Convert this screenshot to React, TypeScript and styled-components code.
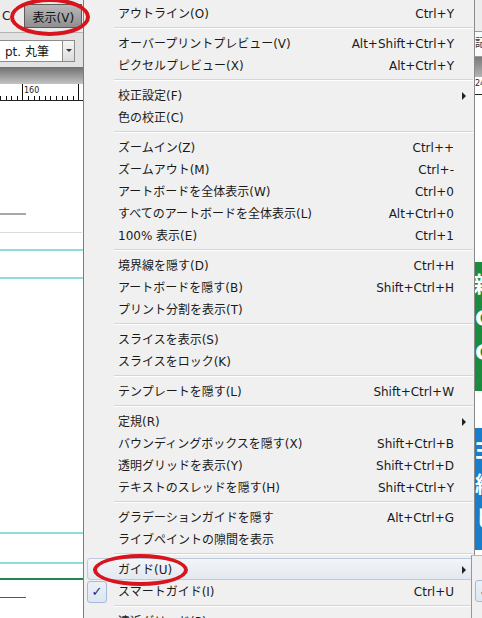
import styled, { createGlobalStyle, css } from 'styled-components';

const GlobalStyle = createGlobalStyle`
  html, body {
    margin: 0;
    padding: 0;
    background: #ffffff;
  }
`;

type Item =
  | { sep: true }
  | {
      sep?: false;
      label: string;
      shortcut?: string;
      sub?: boolean;
      checked?: boolean;
      active?: boolean;
    };

const items: Item[] = [
  { label: 'アウトライン(O)', shortcut: 'Ctrl+Y' },
  { sep: true },
  { label: 'オーバープリントプレビュー(V)', shortcut: 'Alt+Shift+Ctrl+Y' },
  { label: 'ピクセルプレビュー(X)', shortcut: 'Alt+Ctrl+Y' },
  { sep: true },
  { label: '校正設定(F)', sub: true },
  { label: '色の校正(C)' },
  { sep: true },
  { label: 'ズームイン(Z)', shortcut: 'Ctrl++' },
  { label: 'ズームアウト(M)', shortcut: 'Ctrl+-' },
  { label: 'アートボードを全体表示(W)', shortcut: 'Ctrl+0' },
  { label: 'すべてのアートボードを全体表示(L)', shortcut: 'Alt+Ctrl+0' },
  { label: '100% 表示(E)', shortcut: 'Ctrl+1' },
  { sep: true },
  { label: '境界線を隠す(D)', shortcut: 'Ctrl+H' },
  { label: 'アートボードを隠す(B)', shortcut: 'Shift+Ctrl+H' },
  { label: 'プリント分割を表示(T)' },
  { sep: true },
  { label: 'スライスを表示(S)' },
  { label: 'スライスをロック(K)' },
  { sep: true },
  { label: 'テンプレートを隠す(L)', shortcut: 'Shift+Ctrl+W' },
  { sep: true },
  { label: '定規(R)', sub: true },
  { label: 'バウンディングボックスを隠す(X)', shortcut: 'Shift+Ctrl+B' },
  { label: '透明グリッドを表示(Y)', shortcut: 'Shift+Ctrl+D' },
  { label: 'テキストのスレッドを隠す(H)', shortcut: 'Shift+Ctrl+Y' },
  { sep: true },
  { label: 'グラデーションガイドを隠す', shortcut: 'Alt+Ctrl+G' },
  { label: 'ライブペイントの隙間を表示' },
  { sep: true },
  { label: 'ガイド(U)', sub: true, active: true },
  { label: 'スマートガイド(I)', shortcut: 'Ctrl+U', checked: true },
  { sep: true },
  { label: '遠近グリッド(P)', sub: true },
];

const Screen = styled.div`
  position: relative;
  width: 482px;
  height: 618px;
  overflow: hidden;
  display: flex;
  font-family: 'DejaVu Sans', 'Noto Sans CJK JP', sans-serif;
  font-size: 12px;
  color: #1a1a1a;
  background: #ffffff;
`;

/* ---------- left: application window behind the menu ---------- */

const LeftPane = styled.div`
  width: 83px;
  flex-shrink: 0;
  display: flex;
  flex-direction: column;
  overflow: hidden;
`;

const MenuBar = styled.div`
  height: 33px;
  display: flex;
  align-items: center;
  gap: 14px;
  background: #ececec;
  border-bottom: 1px solid #b4b4b4;
  box-sizing: border-box;
  white-space: nowrap;
`;

const MenuBarText = styled.span`
  margin-left: 2px;
  font-size: 12px;
  color: #222;
`;

const MenuBarButton = styled.div`
  height: 24px;
  width: 58px;
  flex-shrink: 0;
  display: flex;
  align-items: center;
  justify-content: center;
  box-sizing: border-box;
  border: 1px solid #5c5c5c;
  background: linear-gradient(#b9b9b9, #8f8f8f);
  font-size: 12px;
  color: #111;
`;

const Toolbar = styled.div`
  height: 34px;
  display: flex;
  align-items: center;
  background: #e2e2e2;
  box-sizing: border-box;
  padding-top: 1px;
`;

const Combo = styled.div`
  height: 22px;
  width: 64px;
  margin-left: -1px;
  box-sizing: border-box;
  border: 1px solid #8c8c8c;
  background: #ffffff;
  display: flex;
  align-items: center;
  padding-left: 5px;
  font-size: 12px;
  color: #1a1a1a;
  white-space: nowrap;
`;

const ComboArrow = styled.div`
  height: 22px;
  width: 12px;
  box-sizing: border-box;
  border: 1px solid #8c8c8c;
  border-left: none;
  background: linear-gradient(#f6f6f6, #dcdcdc);
  display: flex;
  align-items: center;
  justify-content: center;

  &::after {
    content: '';
    border-left: 3px solid transparent;
    border-right: 3px solid transparent;
    border-top: 3px solid #333;
  }
`;

const PanelStrip = styled.div`
  height: 17px;
  background: linear-gradient(#707070, #a9a9a9 70%, #c4c4c4);
`;

const Ruler = styled.div`
  position: relative;
  height: 17px;
  box-sizing: border-box;
  background:
    repeating-linear-gradient(
        to right,
        #111 0 1px,
        transparent 1px 5.6px
      )
      0 100% / 100% 4px no-repeat,
    #ffffff;
  border-bottom: 1px solid #222;
`;

const RulerTick = styled.div<{ $x: number }>`
  position: absolute;
  left: ${(p) => p.$x}px;
  top: 0;
  bottom: 0;
  width: 1px;
  background: #111;
`;

const RulerLabel = styled.span`
  position: absolute;
  left: 24px;
  top: 2px;
  font-size: 8px;
  line-height: 9px;
  color: #222;
`;

const Canvas = styled.div`
  position: relative;
  flex: 1;
  background: #ffffff;
`;

const Guide = styled.div<{ $y: number; $w: number; $c: string; $h?: number }>`
  position: absolute;
  left: 0;
  top: ${(p) => p.$y}px;
  width: ${(p) => p.$w}px;
  height: ${(p) => p.$h ?? 1}px;
  background: ${(p) => p.$c};
`;

/* ---------- the drop-down menu ---------- */

const Menu = styled.div`
  width: 392px;
  flex-shrink: 0;
  box-sizing: border-box;
  border-left: 1px solid #7d7d7d;
  border-right: 1px solid #8a8a8a;
  background: #f0f0f0;
  padding-top: 2px;
  display: flex;
  flex-direction: column;
`;

const Row = styled.div<{ $active?: boolean }>`
  height: 22px;
  flex-shrink: 0;
  margin: 0 1px 0 3px;
  box-sizing: border-box;
  display: grid;
  grid-template-columns: 30px 1fr auto 18px;
  align-items: center;
  border: 1px solid transparent;
  border-radius: 3px;
  white-space: nowrap;

  ${(p) =>
    p.$active &&
    css`
      border-color: #bccadb;
      background: linear-gradient(#f2f5f9, #e3e9f0);
    `}
`;

const Gutter = styled.div`
  height: 22px;
  margin: -1px 0 0 -1px;
  display: flex;
  align-items: center;
`;

const CheckBox = styled.div`
  width: 20px;
  height: 22px;
  flex-shrink: 0;
  box-sizing: border-box;
  border: 1px solid #a6bad3;
  border-radius: 3px;
  background: linear-gradient(#eaf0f7, #dde6f1);
  display: flex;
  align-items: center;
  justify-content: center;
  color: #1d2c6e;
  font-size: 13px;
  font-weight: bold;
`;

const Label = styled.span`
  line-height: 22px;
  color: #1a1a1a;
`;

const Shortcut = styled.span`
  line-height: 22px;
  color: #1a1a1a;
  text-align: right;
`;

const SubArrow = styled.span`
  justify-self: center;
  margin-left: 2px;
  width: 0;
  height: 0;
  border-top: 4px solid transparent;
  border-bottom: 4px solid transparent;
  border-left: 4px solid #222;
`;

const Separator = styled.div`
  height: 8px;
  flex-shrink: 0;
  margin: 0 1px 0 30px;
  display: flex;
  flex-direction: column;
  justify-content: center;

  &::before {
    content: '';
    height: 1px;
    background: #d5d5d5;
  }
  &::after {
    content: '';
    height: 1px;
    background: #ffffff;
  }
`;

/* ---------- right edge: window behind ---------- */

const RightPane = styled.div`
  width: 7px;
  flex-shrink: 0;
  display: flex;
  flex-direction: column;
  overflow: hidden;
  background: #ffffff;
`;

const RightTop = styled.div`
  height: 31px;
  background: #ececec;
`;

const RightField = styled.div`
  height: 26px;
  box-sizing: border-box;
  border-top: 1px solid #9a9a9a;
  border-bottom: 1px solid #9a9a9a;
  background: #fafafa;
  font-size: 11px;
  line-height: 24px;
  color: #333;
  white-space: nowrap;
  overflow: hidden;
`;

const RightBar = styled.div`
  height: 20px;
  background: linear-gradient(#7a7a7a, #b4b4b4);
`;

const RightRuler = styled.div`
  height: 17px;
  font-size: 8px;
  line-height: 14px;
  color: #222;
  white-space: nowrap;
  overflow: hidden;
  border-bottom: 1px solid #222;
`;

const ColorBlock = styled.div<{ $top: number; $h: number; $c: string }>`
  margin-top: ${(p) => p.$top}px;
  height: ${(p) => p.$h}px;
  background: ${(p) => p.$c};
  color: #ffffff;
  font-weight: bold;
  font-size: 22px;
  line-height: 34px;
  padding-top: 6px;
  white-space: pre;
  overflow: hidden;
  text-indent: -2px;
`;

/* ---------- overlays ---------- */

const SubMenu = styled.div`
  position: absolute;
  left: 471px;
  top: 555px;
  width: 20px;
  height: 70px;
  box-sizing: border-box;
  border-left: 1px solid #979797;
  border-top: 1px solid #b9b9b9;
  background: #f0f0f0;
  padding: 24px 0 0 3px;
`;

const Ellipse = styled.div<{ $x: number; $y: number; $w: number; $h: number }>`
  position: absolute;
  left: ${(p) => p.$x}px;
  top: ${(p) => p.$y}px;
  width: ${(p) => p.$w}px;
  height: ${(p) => p.$h}px;
  box-sizing: border-box;
  border: 4px solid #d8141c;
  border-radius: 50%;
  pointer-events: none;
`;

export default function App() {
  return (
    <>
      <GlobalStyle />
      <Screen>
        <LeftPane>
          <MenuBar>
            <MenuBarText>C</MenuBarText>
            <MenuBarButton>表示(V)</MenuBarButton>
          </MenuBar>
          <Toolbar>
            <Combo>pt. 丸筆</Combo>
            <ComboArrow />
          </Toolbar>
          <PanelStrip />
          <Ruler>
            <RulerTick $x={22} />
            <RulerTick $x={78} />
            <RulerLabel>160</RulerLabel>
          </Ruler>
          <Canvas>
            <Guide $y={112} $w={26} $c="#a8a8a8" $h={2} />
            <Guide $y={131} $w={82} $c="#dcdcdc" />
            <Guide $y={148} $w={83} $c="#8fdcdc" $h={2} />
            <Guide $y={176} $w={83} $c="#8fdcdc" $h={2} />
            <Guide $y={431} $w={83} $c="#8fdcdc" $h={2} />
            <Guide $y={461} $w={83} $c="#8fdcdc" $h={2} />
            <Guide $y={477} $w={83} $c="#1e8a50" $h={2} />
            <Guide $y={496} $w={26} $c="#555555" />
          </Canvas>
        </LeftPane>

        <Menu>
          {items.map((item, i) =>
            item.sep ? (
              <Separator key={i} />
            ) : (
              <Row key={i} $active={item.active}>
                <Gutter>{item.checked && <CheckBox>✓</CheckBox>}</Gutter>
                <Label>{item.label}</Label>
                <Shortcut>{item.shortcut}</Shortcut>
                {item.sub ? <SubArrow /> : <span />}
              </Row>
            ),
          )}
        </Menu>

        <RightPane>
          <RightTop />
          <RightField>記</RightField>
          <RightBar />
          <RightRuler>24</RightRuler>
          <ColorBlock $top={167} $h={123} $c="#1b8b3d">
            {'新\nC\nC'}
          </ColorBlock>
          <ColorBlock $top={37} $h={116} $c="#1a7dc9">
            {'ヨ\n総\nし'}
          </ColorBlock>
        </RightPane>

        <SubMenu>
          <CheckBox>✓</CheckBox>
        </SubMenu>

        <Ellipse $x={10} $y={-2} $w={80} $h={38} />
        <Ellipse $x={93} $y={554} $w={95} $h={32} />
      </Screen>
    </>
  );
}
